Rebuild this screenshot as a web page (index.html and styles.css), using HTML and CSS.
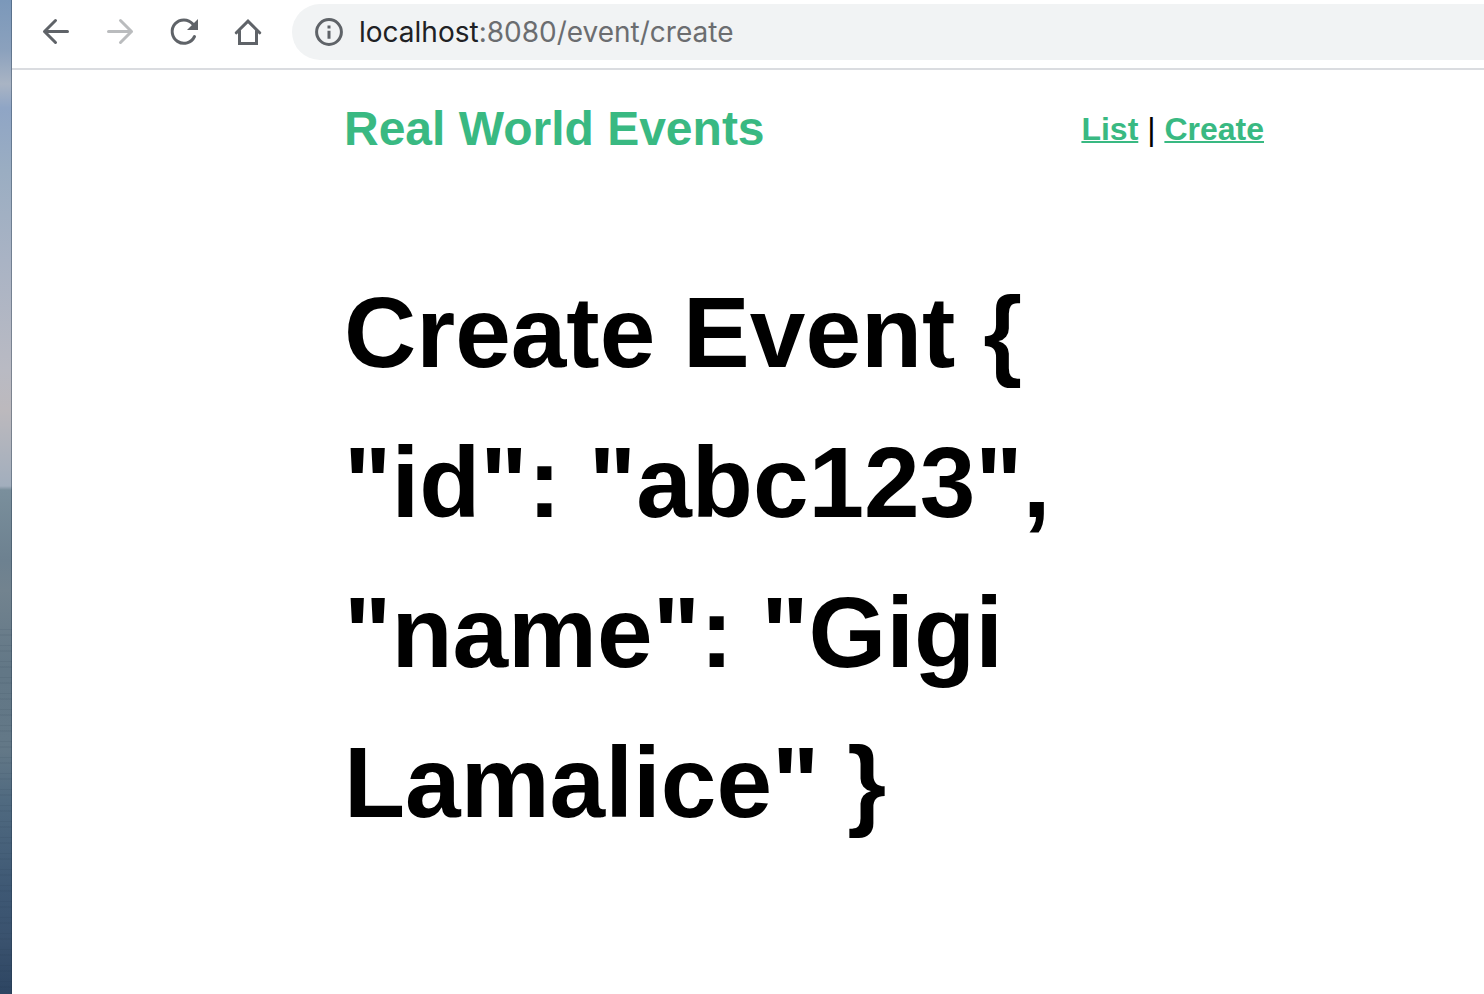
FILE: index.html
```html
<!DOCTYPE html>
<html lang="en">
<head>
<meta charset="utf-8">
<title>Real World Events</title>
<link rel="stylesheet" href="styles.css">
</head>
<body class="desktop">
<div class="window">
  <div class="toolbar">
    <button class="tool" type="button" aria-label="Back">
      <svg class="icon" viewBox="0 0 32 32"><path d="M27.500 15.500H4.500M15.500 4.500L4.500 15.500l11 11"/></svg>
    </button>
    <button class="tool tool-disabled" type="button" aria-label="Forward" disabled>
      <svg class="icon" viewBox="0 0 32 32"><path d="M4.500 15.500h23M16.500 4.500l11 11l-11 11"/></svg>
    </button>
    <button class="tool" type="button" aria-label="Reload">
      <svg class="icon" viewBox="0 0 32 32"><path d="M24.800 8A11.700 11.700 0 1 0 26.500 20.500"/><path class="solid" d="M30 3V14H19z"/></svg>
    </button>
    <button class="tool" type="button" aria-label="Home">
      <svg class="icon icon-home" viewBox="0 0 32 32"><path d="M4.300 16.800L16 5.200L27.700 16.800M7.500 14.500v13h17v-13"/></svg>
    </button>
    <div class="address">
      <button class="info" type="button" aria-label="View site information">
        <svg class="icon icon-info" viewBox="0 0 28 28"><circle cx="14" cy="14" r="12.400"/><path class="solid" d="M12.500 7.500h3v3h-3zM12.500 12.700h3v8h-3z"/></svg>
      </button>
      <div class="url" role="textbox" aria-label="Address" contenteditable="true" spellcheck="false"><span class="host">localhost</span>:8080/event/create</div>
    </div>
  </div>
  <div class="page">
    <header class="header">
      <div class="brand">Real World Events</div>
      <nav class="nav"><a class="link" href="#list">List</a> | <a class="link" href="#create">Create</a></nav>
    </header>
    <main>
      <h1 class="heading">Create Event { "id": "abc123", "name": "Gigi Lamalice" }</h1>
    </main>
  </div>
</div>
</body>
</html>
```
FILE: styles.css
```css
* { box-sizing: border-box; }

.desktop {
  margin: 0;
  min-height: 100vh;
  display: flex;
  padding-left: 12px;
  background:
    linear-gradient(to right, transparent 11px, rgba(30, 50, 70, 0.4) 11px, rgba(30, 50, 70, 0.4) 12px, transparent 12px),
    repeating-linear-gradient(to bottom, transparent 0 9px, rgba(20, 40, 60, 0.08) 9px 10px, transparent 10px 14px, rgba(20, 40, 60, 0.06) 14px 16px) 0 620px no-repeat,
    linear-gradient(to bottom, #7b98ba 0, #8ba1bd 50px, #a9b4c4 84px, #8fa5c5 108px, #9aadc2 170px, #a9b3c4 260px, #b9bac3 370px, #bcb9bd 410px, #a2aebd 486px, #7a8f9c 490px, #6d8190 560px, #72838f 590px, #627786 670px, #637887 750px, #506a80 800px, #3e5874 890px, #3a526e 940px, #2d4562 994px);
}

.window {
  flex: 1;
  min-width: 0;
  background: #fff;
}

.toolbar {
  display: flex;
  align-items: center;
  height: 70px;
  padding: 0 0 4px 28px;
  gap: 32px;
  border-bottom: 2px solid #dadce0;
}

.tool,
.info {
  display: flex;
  padding: 0;
  border: 0;
  background: none;
  color: #5f6368;
}

.tool-disabled { color: #babcbe; }

.icon {
  width: 32px;
  height: 32px;
  fill: none;
  stroke: currentColor;
  stroke-width: 3;
  stroke-linecap: round;
  stroke-linejoin: round;
}

.icon-home { stroke-linejoin: miter; }

.icon .solid {
  fill: currentColor;
  stroke: none;
}

.icon-info {
  width: 28px;
  height: 28px;
}

.address {
  flex: 1;
  display: flex;
  align-items: center;
  gap: 16px;
  height: 56px;
  margin-left: -4px;
  padding-left: 23px;
  border-radius: 28px 0 0 28px;
  background: #f1f3f4;
}

.url {
  font: 28px/32px Inter, sans-serif;
  color: #6b6d70;
  white-space: nowrap;
}

.host { color: #202124; }

.page {
  max-width: 1252px;
  padding: 23px 0 0 332px;
  font-family: "Liberation Sans", Arial, sans-serif;
  line-height: 1.5;
  color: #000;
}

.header {
  display: flex;
  align-items: center;
  justify-content: space-between;
}

.brand {
  font-size: 48px;
  font-weight: bold;
  color: #39b982;
}

.nav { font-size: 32px; }

.link {
  font-weight: bold;
  color: #39b982;
  text-decoration-thickness: 2px;
}

.heading {
  max-width: 800px;
  margin: 92px 0 0;
  font-size: 100px;
  font-weight: bold;
}
```
